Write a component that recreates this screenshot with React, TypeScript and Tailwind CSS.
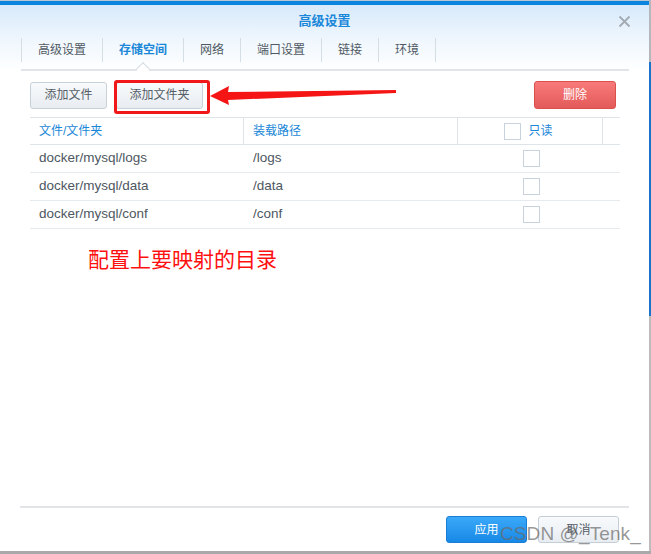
const font = { fontFamily: '"Liberation Sans", "Noto Sans CJK SC", sans-serif' };

const tabs = ["高级设置", "存储空间", "网络", "端口设置", "链接", "环境"];

const rows = [
  { file: "docker/mysql/logs", path: "/logs" },
  { file: "docker/mysql/data", path: "/data" },
  { file: "docker/mysql/conf", path: "/conf" },
];

function Checkbox() {
  return <span className="block w-[17px] h-[17px] border border-[#c9d3dd] bg-white" />;
}

export default function App() {
  return (
    <div className="flex flex-col w-[651px] h-[554px] bg-white overflow-hidden" style={font}>
      <div className="flex flex-1">
        {/* dialog */}
        <div className="relative flex flex-col w-[649px] h-[551px] bg-white">
          <div className="h-[1px] bg-[#b9c6d3]" />
          <div className="h-[4px] bg-[#0b84e0]" />
          <div className="bg-gradient-to-b from-[#d7eafb] via-[#eef6fd] to-white">
            {/* title */}
            <div className="relative flex items-center justify-center h-[32px]">
              <span className="text-[13px] font-semibold text-[#1a87d8]">高级设置</span>
              <svg className="absolute right-[18px] top-[10px]" width="13" height="13" viewBox="0 0 13 13">
                <path d="M1.5 1.5 L11.5 11.5 M11.5 1.5 L1.5 11.5" stroke="#a2aab2" strokeWidth="1.8" />
              </svg>
            </div>
            {/* tabs */}
            <div className="ml-[21px] mr-[20px] pt-[1px] pb-[7px] border-b-2 border-[#e1e5ea] flex">
              {tabs.map((t, i) => (
                <div
                  key={t}
                  className={
                    "relative h-[24px] px-4 flex items-center border-r border-[#d5dde5] text-[12px] " +
                    (i === 0 ? "border-l " : "") +
                    (i === 1 ? "text-[#1a87d8] font-semibold" : "text-[#505a64]")
                  }
                >
                  {t}
                  {i === 1 && (
                    <span className="absolute left-1/2 -bottom-[12px] -ml-[5px] w-[10px] h-[10px] rotate-45 bg-white border-l border-t border-[#d5dbe1]" />
                  )}
                </div>
              ))}
            </div>
          </div>

          {/* content */}
          <div className="flex-1 flex flex-col pl-[30px] pr-[29px] pt-[10px]">
            <div className="flex items-center justify-between pr-[4px]">
              <div className="flex gap-[9px]">
                <button className="h-[27px] w-[77px] rounded-[3px] border border-[#c8d0d8] bg-gradient-to-b from-[#f8fafc] to-[#e8edf2] text-[12px] text-[#555d66]">
                  添加文件
                </button>
                <button className="h-[27px] w-[87px] rounded-[3px] border border-[#c8d0d8] bg-gradient-to-b from-[#f8fafc] to-[#e8edf2] text-[12px] text-[#555d66]">
                  添加文件夹
                </button>
              </div>
              <button className="h-[28px] w-[82px] rounded-[3px] border border-[#d9504c] bg-gradient-to-b from-[#f87a7a] to-[#e35a5a] text-[12px] text-white">
                删除
              </button>
            </div>

            {/* table */}
            <div className="mt-[8px] border-t border-[#dde4ea] text-[13.5px] text-[#4d5761]">
              <div className="flex h-[27px] border-b border-[#dde4ea] text-[#1a87d8]">
                <div className="w-[214px] flex items-center pl-[9px] border-r border-[#dde4ea] text-[12px]">文件/文件夹</div>
                <div className="w-[214px] flex items-center pl-[9px] border-r border-[#dde4ea] text-[12px]">装载路径</div>
                <div className="w-[145px] flex items-center justify-center gap-[7px] border-r border-[#dde4ea] text-[12px] pr-[3px]">
                  <Checkbox />
                  只读
                </div>
                <div className="flex-1" />
              </div>
              {rows.map((r) => (
                <div key={r.file} className="flex h-[28px] border-b border-[#e5eaef]">
                  <div className="w-[214px] flex items-center pl-[9px]">{r.file}</div>
                  <div className="w-[214px] flex items-center pl-[9px]">{r.path}</div>
                  <div className="w-[145px] flex items-center justify-center pl-[1px]">
                    <Checkbox />
                  </div>
                  <div className="flex-1" />
                </div>
              ))}
            </div>

            <div className="mt-[19px] ml-[58px] text-[21px] leading-[24px] text-[#ff1010]">配置上要映射的目录</div>
          </div>

          {/* footer */}
          <div className="mx-[20px] border-t-2 border-[#e2e5e8]" />
          <div className="flex justify-end gap-[11px] pr-[30px] pt-[8px] pb-[8px]">
            <button className="h-[27px] w-[81px] rounded-[3px] border border-[#1a7ed6] bg-gradient-to-b from-[#3aa9f9] to-[#1688e6] text-[12px] text-white">
              应用
            </button>
            <button className="h-[27px] w-[81px] rounded-[3px] border border-[#c5cdd6] bg-gradient-to-b from-[#f8fafc] to-[#e8edf2] text-[12px] text-[#555d66]">
              取消
            </button>
          </div>

          {/* annotations */}
          <span className="absolute left-[114px] top-[80px] w-[96px] h-[34px] border-[3px] border-[#f01818] rounded-[3px]" />
          <svg className="absolute left-[205px] top-[82px]" width="195" height="28" viewBox="205 82 195 28">
            <polygon points="210,96 229,86 228,92 396,90 396,93 228,100 229,105" fill="#f51515" />
          </svg>
          <span className="absolute left-[500px] top-[520px] text-[19px] text-[#6a6a6a]/70 tracking-[0.1px]">CSDN @_Tenk_</span>
        </div>
        {/* background window edge */}
        <div className="flex flex-col w-[2px]">
          <div className="h-[62px] bg-[#b4b8bc]" />
          <div className="h-[254px] bg-[#1a74c9]" />
          <div className="flex-1 bg-[#bcbcbc]" />
        </div>
      </div>
      <div className="h-[3px] bg-[#a9a9a9]" />
    </div>
  );
}
